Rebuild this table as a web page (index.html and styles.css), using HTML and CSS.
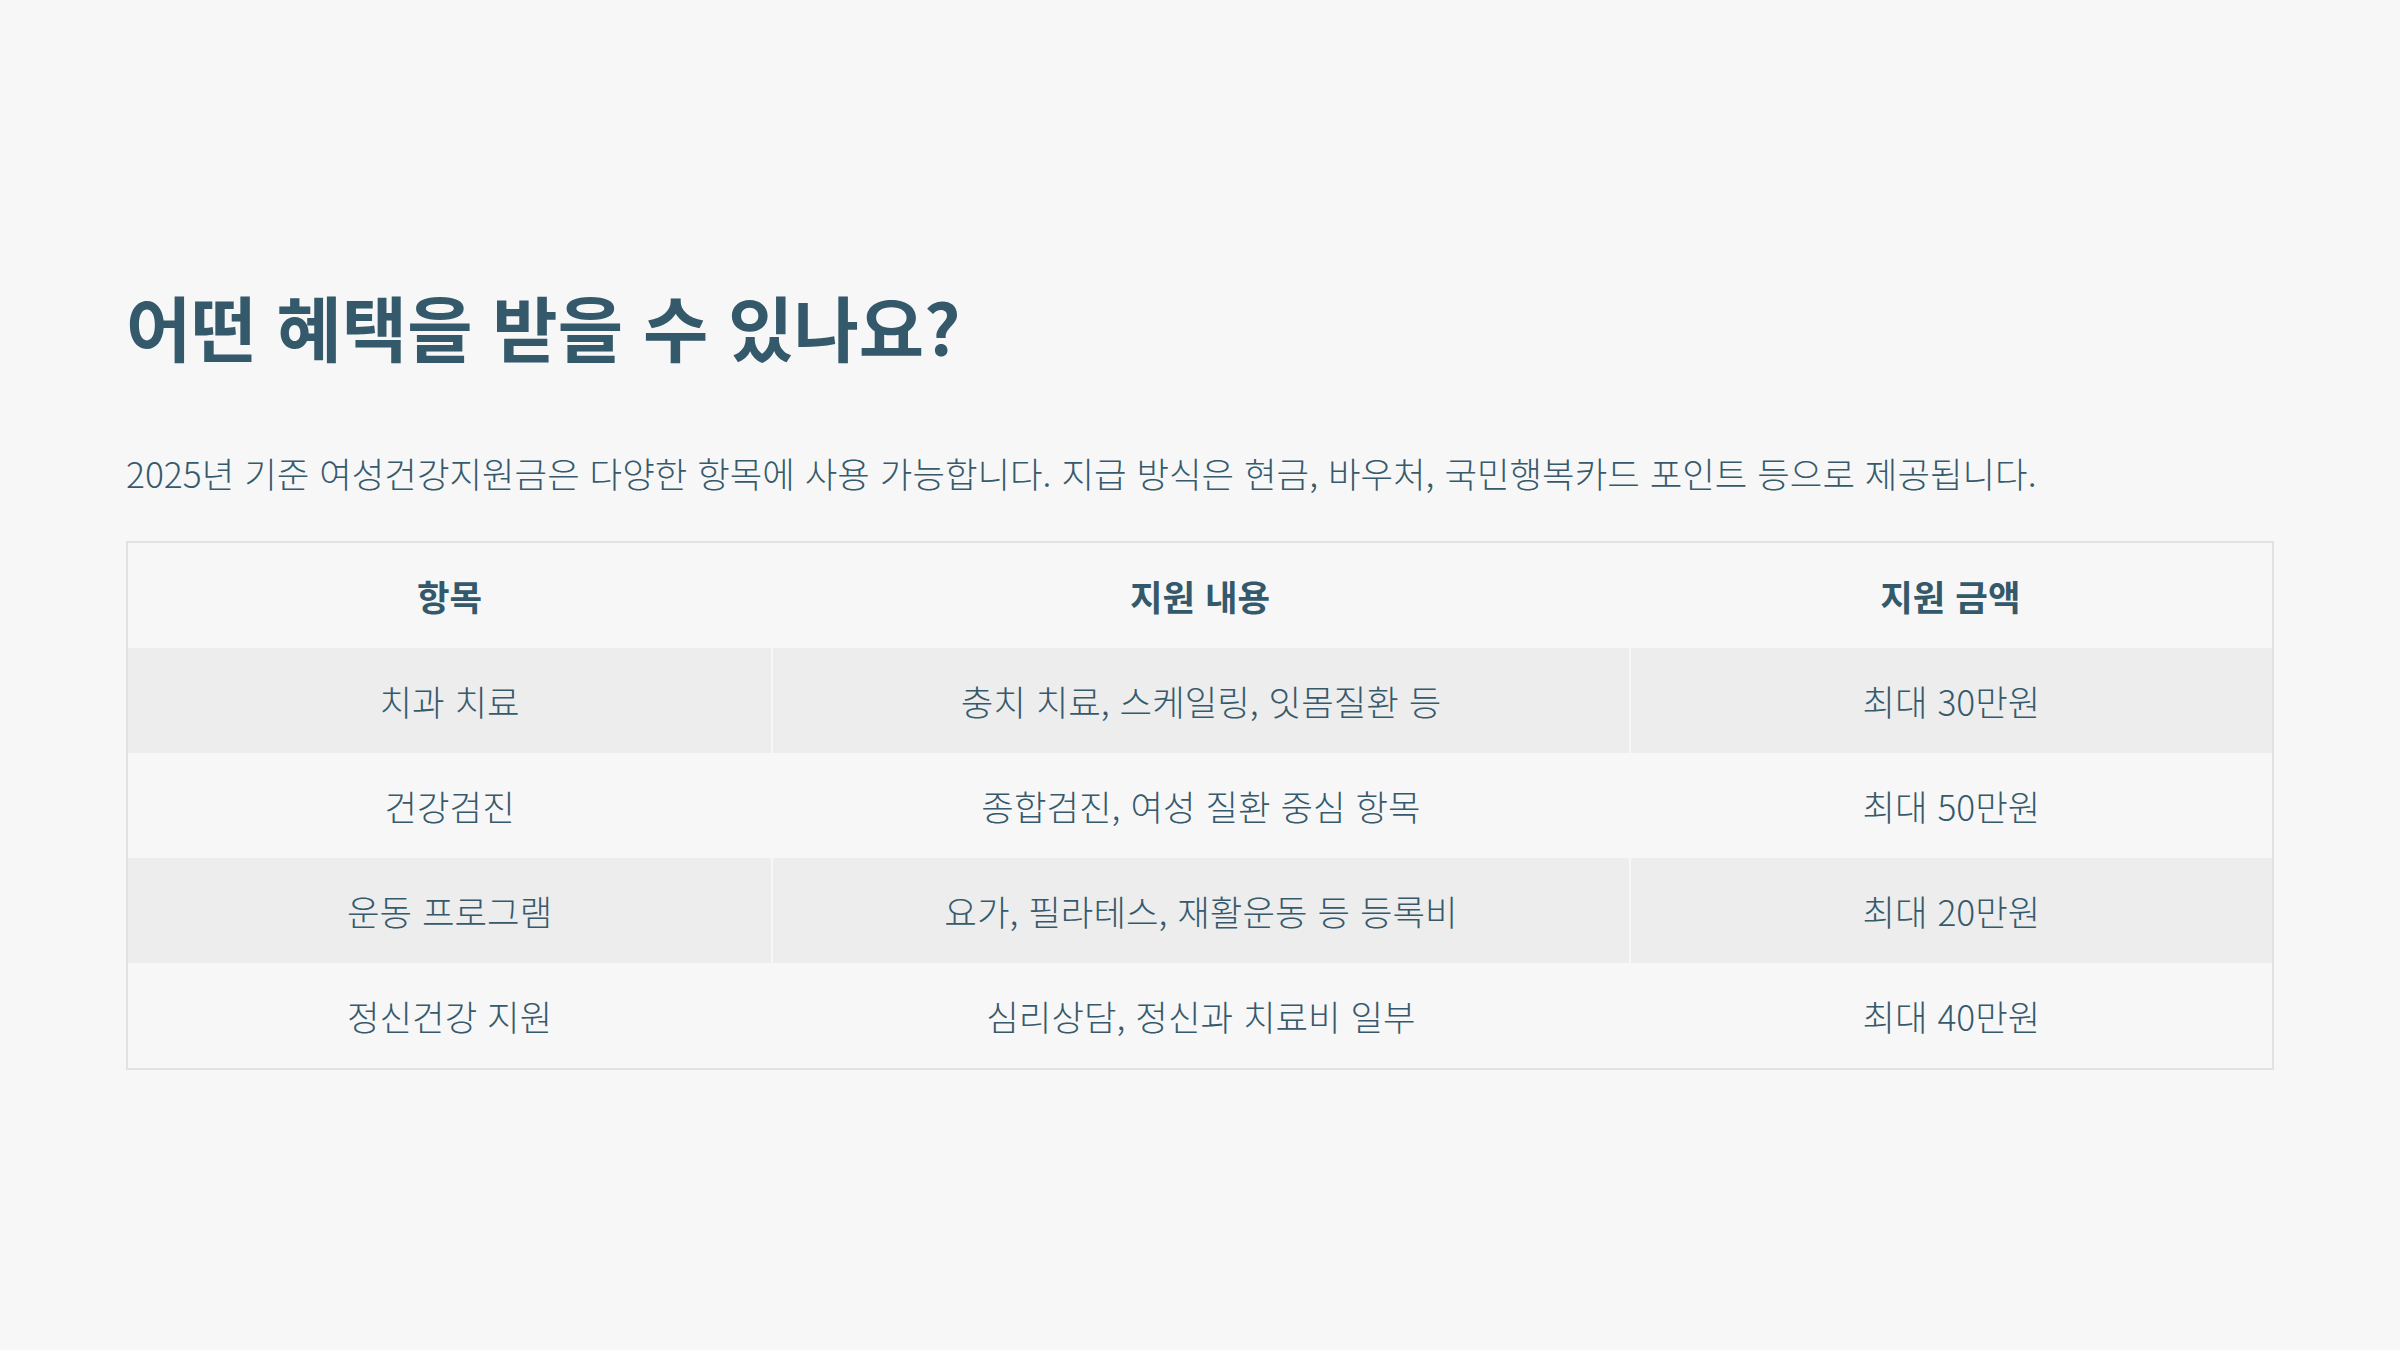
FILE: index.html
```html
<!DOCTYPE html>
<html lang="ko">
<head>
<meta charset="utf-8">
<title>혜택</title>
<link rel="stylesheet" href="styles.css">
</head>
<body>
<main class="page">
  <h1 class="title">어떤 혜택을 받을 수 있나요?</h1>
  <p class="lead">2025년 기준 여성건강지원금은 다양한 항목에 사용 가능합니다. 지급 방식은 현금, 바우처, 국민행복카드 포인트 등으로 제공됩니다.</p>
  <table class="benefits">
    <thead>
      <tr><th class="c1">항목</th><th class="c2">지원 내용</th><th class="c3">지원 금액</th></tr>
    </thead>
    <tbody>
      <tr><td>치과 치료</td><td>충치 치료, 스케일링, 잇몸질환 등</td><td>최대 30만원</td></tr>
      <tr><td>건강검진</td><td>종합검진, 여성 질환 중심 항목</td><td>최대 50만원</td></tr>
      <tr><td>운동 프로그램</td><td>요가, 필라테스, 재활운동 등 등록비</td><td>최대 20만원</td></tr>
      <tr><td>정신건강 지원</td><td>심리상담, 정신과 치료비 일부</td><td>최대 40만원</td></tr>
    </tbody>
  </table>
</main>
</body>
</html>
```

FILE: styles.css
```css
html, body {
  margin: 0;
  padding: 0;
  background: #f7f7f7;
}
body {
  font-family: "Noto Sans CJK KR", "Noto Sans", sans-serif;
  color: #365a6c;
}
.page {
  padding: 283px 126px 0;
}
.title {
  margin: 0;
  font-size: 71px;
  font-weight: 700;
  line-height: 1.2;
  color: #34596b;
}
.lead {
  margin: 80px 0 0;
  font-size: 35.4px;
  font-weight: 300;
  line-height: 1.4;
}
.benefits {
  margin-top: 43px;
  width: 100%;
  border-collapse: separate;
  border-spacing: 0;
  border: 2px solid #e2e2e2;
  table-layout: fixed;
}
.benefits th, .benefits td {
  height: 105px;
  padding: 0;
  text-align: center;
  vertical-align: middle;
  font-size: 35.4px;
}
.benefits td + td {
  border-left: 2px solid #f7f7f7;
}
.benefits th {
  font-weight: 700;
  color: #34596b;
}
.benefits td {
  font-weight: 300;
}
.c1, .c3 { width: 30%; }
.c2 { width: 40%; }
.benefits tbody tr:nth-child(odd) {
  background: #ededed;
}
```
